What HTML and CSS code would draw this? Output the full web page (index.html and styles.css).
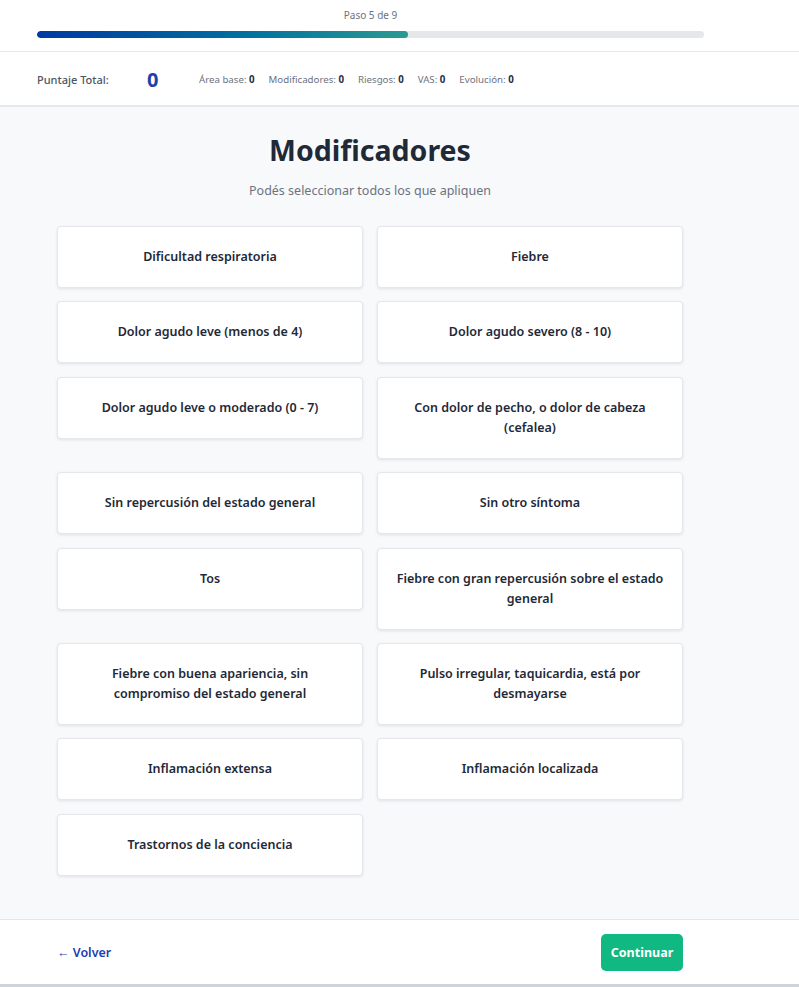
FILE: index.html
```html
<!DOCTYPE html>
<html lang="es">
<head>
<meta charset="utf-8">
<title>Modificadores</title>
<link rel="stylesheet" href="styles.css">
</head>
<body>
<div class="page">
  <header class="progress-head">
    <div class="progress-wrap">
      <div class="step-label">Paso 5 de 9</div>
      <div class="track"><div class="fill" style="width:55.56%"></div></div>
    </div>
  </header>

  <section class="score-bar">
    <span class="score-label">Puntaje Total:</span>
    <span class="score-total">0</span>
    <ul class="score-parts">
      <li>Área base: <b>0</b></li>
      <li>Modificadores: <b>0</b></li>
      <li>Riesgos: <b>0</b></li>
      <li>VAS: <b>0</b></li>
      <li>Evolución: <b>0</b></li>
    </ul>
  </section>

  <main class="content">
    <h1 class="title">Modificadores</h1>
    <p class="subtitle">Podés seleccionar todos los que apliquen</p>
    <div class="options">
      <button class="option">Dificultad respiratoria</button>
      <button class="option">Fiebre</button>
      <button class="option">Dolor agudo leve (menos de 4)</button>
      <button class="option">Dolor agudo severo (8 - 10)</button>
      <button class="option">Dolor agudo leve o moderado (0 - 7)</button>
      <button class="option">Con dolor de pecho, o dolor de cabeza (cefalea)</button>
      <button class="option">Sin repercusión del estado general</button>
      <button class="option">Sin otro síntoma</button>
      <button class="option">Tos</button>
      <button class="option">Fiebre con gran repercusión sobre el estado general</button>
      <button class="option">Fiebre con buena apariencia, sin compromiso del estado general</button>
      <button class="option">Pulso irregular, taquicardia, está por desmayarse</button>
      <button class="option">Inflamación extensa</button>
      <button class="option">Inflamación localizada</button>
      <button class="option">Trastornos de la conciencia</button>
    </div>
  </main>

  <footer class="actions">
    <a class="back" href="#">← Volver</a>
    <button class="next">Continuar</button>
  </footer>
</div>
</body>
</html>
```

FILE: styles.css
```css
* { box-sizing: border-box; }

html, body {
  margin: 0;
  padding: 0;
  background: #ffffff;
  font-family: "Noto Sans", "Open Sans", sans-serif;
  color: #1f2937;
}

.page {
  width: 799px;
  min-height: 987px;
  display: flex;
  flex-direction: column;
}

/* progress header */
.progress-head {
  background: #fff;
  height: 52px;
  border-bottom: 1px solid #e5e7eb;
  padding: 8px 0 0 37px;
}

.progress-wrap {
  width: 667px;
}

.step-label {
  text-align: center;
  font-size: 10px;
  line-height: 14px;
  color: #6b7280;
}

.track {
  margin-top: 9px;
  height: 7px;
  border-radius: 4px;
  background: #e5e7eb;
  overflow: hidden;
}

.fill {
  height: 100%;
  border-radius: 4px;
  background: linear-gradient(90deg, #0039a3 0%, #006fa0 55%, #2a9a92 100%);
}

/* score summary */
.score-bar {
  background: #fff;
  height: 55px;
  border-bottom: 2px solid #e6e8ec;
  display: flex;
  align-items: center;
  padding: 2px 0 0 37px;
}

.score-label {
  font-size: 11px;
  font-weight: 500;
  color: #4b5563;
  width: 110px;
}

.score-total {
  font-size: 20px;
  font-weight: 700;
  color: #1e40af;
  width: 52px;
  line-height: 1;
}

.score-parts {
  list-style: none;
  margin: 0;
  padding: 0;
  display: flex;
  gap: 14px;
  font-size: 9.7px;
  color: #6b7280;
}

.score-parts b {
  color: #1f2a44;
  font-weight: 700;
}

/* main content */
.content {
  flex: 1;
  background: #f8f9fb;
  padding: 23px 0 39px 57px;
  border-bottom: 1px solid #e5e7eb;
}

.title {
  width: 626px;
  margin: 0;
  text-align: center;
  font-size: 28.5px;
  line-height: 40px;
  font-weight: 700;
  color: #1f2937;
}

.subtitle {
  width: 626px;
  margin: 12px 0 26px;
  text-align: center;
  font-size: 12.5px;
  line-height: 18px;
  color: #6b7280;
}

.options {
  width: 626px;
  display: grid;
  grid-template-columns: 306px 306px;
  column-gap: 14px;
  row-gap: 13.4px;
  align-items: start;
}

.option {
  font-family: inherit;
  background: #fff;
  border: 1px solid #e5e7eb;
  border-radius: 4px;
  box-shadow: 0 1px 3px rgba(15, 23, 42, 0.1);
  padding: 20px 16px;
  font-size: 12.5px;
  line-height: 20px;
  font-weight: 600;
  color: #1f2937;
  text-align: center;
  cursor: pointer;
}

/* footer actions */
.actions {
  background: #fff;
  height: 67px;
  border-bottom: 3px solid #cfd3dc;
  display: flex;
  align-items: center;
  justify-content: space-between;
  padding: 0 116px 0 57px;
}

.back {
  font-size: 12.5px;
  font-weight: 600;
  color: #1e40af;
  text-decoration: none;
}

.next {
  font-family: inherit;
  background: #10b981;
  color: #fff;
  border: none;
  border-radius: 5px;
  width: 82px;
  height: 37px;
  font-size: 12.5px;
  font-weight: 700;
  cursor: pointer;
}
```
